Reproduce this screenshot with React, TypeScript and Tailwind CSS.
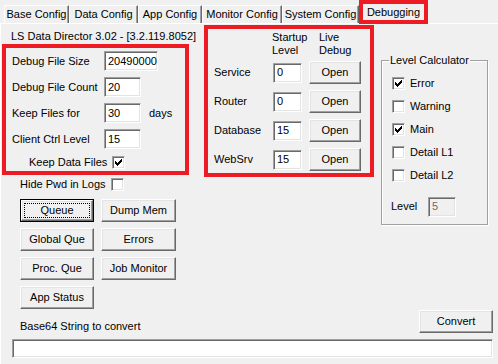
import React from 'react';

// classic win32 3d edges
const sunken =
  'border border-t-[#a0a0a0] border-l-[#a0a0a0] border-b-white border-r-white shadow-[inset_1px_1px_0_#696969,inset_-1px_-1px_0_#e3e3e3]';
const raised =
  'border border-t-white border-l-white border-b-[#696969] border-r-[#696969] shadow-[inset_-1px_-1px_0_#a0a0a0,inset_1px_1px_0_#e3e3e3] bg-[#f0f0f0]';
const red = 'border-[4px] border-[#ed1c24]';

const tabs = [
  { label: 'Base Config', w: 'w-[65px]' },
  { label: 'Data Config', w: 'w-[69px]' },
  { label: 'App Config', w: 'w-[64px]' },
  { label: 'Monitor Config', w: 'w-[80px]' },
  { label: 'System Config', w: 'w-[77px]' },
];

const Check = ({ checked }: { checked?: boolean }) => (
  <div className={`w-[13px] h-[13px] shrink-0 bg-white flex items-center justify-center ${sunken}`}>
    {checked && (
      <svg width="7" height="7" viewBox="0 0 7 7" shapeRendering="crispEdges">
        <path
          d="M6 0h1v3h-1v1h-1v1h-1v1h-1v1h-1v-1h-1v-1h-1v-3h1v1h1v1h1v-1h1v-1h1z"
          fill="#000"
        />
      </svg>
    )}
  </div>
);

const Field = ({ value, w, disabled }: { value?: string; w: string; disabled?: boolean }) => (
  <div
    className={`${w} h-[20px] shrink-0 px-[3px] flex items-center ${sunken} ${
      disabled ? 'bg-[#f0f0f0] text-[#6d6d6d]' : 'bg-white'
    }`}
  >
    {value}
  </div>
);

const Btn = ({ label, w, h = 'h-[23px]' }: { label: string; w: string; h?: string }) => (
  <div className={`${w} ${h} flex items-center justify-center ${raised}`}>{label}</div>
);

const settings = [
  { label: 'Debug File Size', value: '20490000', w: 'w-[54px]' },
  { label: 'Debug File Count', value: '20', w: 'w-[37px]' },
  { label: 'Keep Files for', value: '30', w: 'w-[37px]', suffix: 'days' },
  { label: 'Client Ctrl Level', value: '15', w: 'w-[37px]' },
];

const services = [
  { name: 'Service', level: '0' },
  { name: 'Router', level: '0' },
  { name: 'Database', level: '15' },
  { name: 'WebSrv', level: '15' },
];

const levels = [
  { name: 'Error', on: true },
  { name: 'Warning', on: false },
  { name: 'Main', on: true },
  { name: 'Detail L1', on: false },
  { name: 'Detail L2', on: false },
];

export default function App() {
  return (
    <div className="w-[498px] h-[364px] bg-[#f0f0f0] overflow-hidden text-[11px] leading-none text-black font-['Liberation_Sans',Arial,sans-serif]">
      {/* tab strip */}
      <div className="h-[23px] flex items-end pl-[4px]">
        {tabs.map((t) => (
          <div
            key={t.label}
            className={`${t.w} h-[18px] border border-b-0 border-t-white border-l-white border-r-[#696969] shadow-[inset_-1px_0_0_#a0a0a0] flex items-center justify-center whitespace-nowrap`}
          >
            {t.label}
          </div>
        ))}
        <div className={`relative z-10 w-[69px] h-[24px] mb-[-1px] ${red} bg-[#f0f0f0] flex items-center justify-center`}>
          Debugging
        </div>
      </div>

      {/* tab page */}
      <div className="h-[341px] border-t border-l border-white flex flex-col">
        <div className="flex items-start">
          {/* left column */}
          <div className="w-[203px] shrink-0 flex flex-col">
            <div className="ml-[10px] mt-[5px] h-[14px] leading-[14px] whitespace-nowrap">
              LS Data Director 3.02 - [3.2.119.8052]
            </div>
            <div className={`ml-[1px] mt-[1px] w-[187px] h-[131px] ${red} flex flex-col pt-[3px] gap-[6px]`}>
              {settings.map((s) => (
                <div key={s.label} className="h-[20px] flex items-center">
                  <div className="w-[98px] pl-[6px] whitespace-nowrap">{s.label}</div>
                  <Field value={s.value} w={s.w} />
                  {s.suffix && <div className="ml-[8px]">{s.suffix}</div>}
                </div>
              ))}
              <div className="h-[14px] flex items-center">
                <div className="w-[106px] pl-[23px] whitespace-nowrap">Keep Data Files</div>
                <Check checked />
              </div>
            </div>
            <div className="mt-[3px] h-[13px] flex items-center">
              <div className="w-[110px] pl-[19px] whitespace-nowrap">Hide Pwd in Logs</div>
              <Check />
            </div>
            <div className="mt-[8px] ml-[19px] grid grid-cols-[74px_75px] gap-x-[7px] gap-y-[6px]">
              <div className="h-[23px] border border-black">
                <div className={`h-full ${raised} p-[2px]`}>
                  <div className="h-full border border-dotted border-black flex items-center justify-center">
                    Queue
                  </div>
                </div>
              </div>
              <Btn label="Dump Mem" w="w-[75px]" />
              <Btn label="Global Que" w="w-[74px]" />
              <Btn label="Errors" w="w-[75px]" />
              <Btn label="Proc. Que" w="w-[74px]" />
              <Btn label="Job Monitor" w="w-[75px]" />
              <Btn label="App Status" w="w-[74px]" />
            </div>
          </div>

          {/* services */}
          <div className={`mt-[1px] w-[170px] h-[152px] shrink-0 ${red} flex flex-col`}>
            <div className="mt-[2px] pl-[64px] flex leading-[13px]">
              <div className="w-[47px]">
                Startup
                <br />
                Level
              </div>
              <div>
                Live
                <br />
                Debug
              </div>
            </div>
            <div className="mt-[4px] flex flex-col gap-[6px]">
              {services.map((s) => (
                <div key={s.name} className="h-[23px] flex items-center">
                  <div className="w-[65px] pl-[6px]">{s.name}</div>
                  <Field value={s.level} w="w-[29px]" />
                  <div className="ml-[7px]">
                    <Btn label="Open" w="w-[52px]" />
                  </div>
                </div>
              ))}
            </div>
          </div>

          {/* level calculator */}
          <fieldset className="ml-[7px] mt-[30px] w-[107px] h-[171px] border border-[#a0a0a0] shadow-[inset_1px_1px_0_#fff,1px_1px_0_#fff]">
            <legend className="ml-[7px] px-[1px] leading-[13px]">Level Calculator</legend>
            <div className="mt-[8px] flex flex-col gap-[6px] pl-[10px]">
              {levels.map((l) => (
                <div key={l.name} className="h-[17px] flex items-center">
                  <Check checked={l.on} />
                  <div className="ml-[5px]">{l.name}</div>
                </div>
              ))}
            </div>
            <div className="mt-[13px] pl-[9px] h-[19px] flex items-center">
              <div className="w-[37px]">Level</div>
              <Field value="5" w="w-[28px]" disabled />
            </div>
          </fieldset>
        </div>

        {/* base64 */}
        <div className="mt-[1px] h-[23px] flex items-end justify-between">
          <div className="pl-[19px] leading-[13px]">Base64 String to convert</div>
          <div className="mr-[5px]">
            <Btn label="Convert" w="w-[74px]" />
          </div>
        </div>
        <div className={`mt-[6px] ml-[11px] mr-[5px] h-[19px] bg-white ${sunken}`} />
      </div>
    </div>
  );
}
